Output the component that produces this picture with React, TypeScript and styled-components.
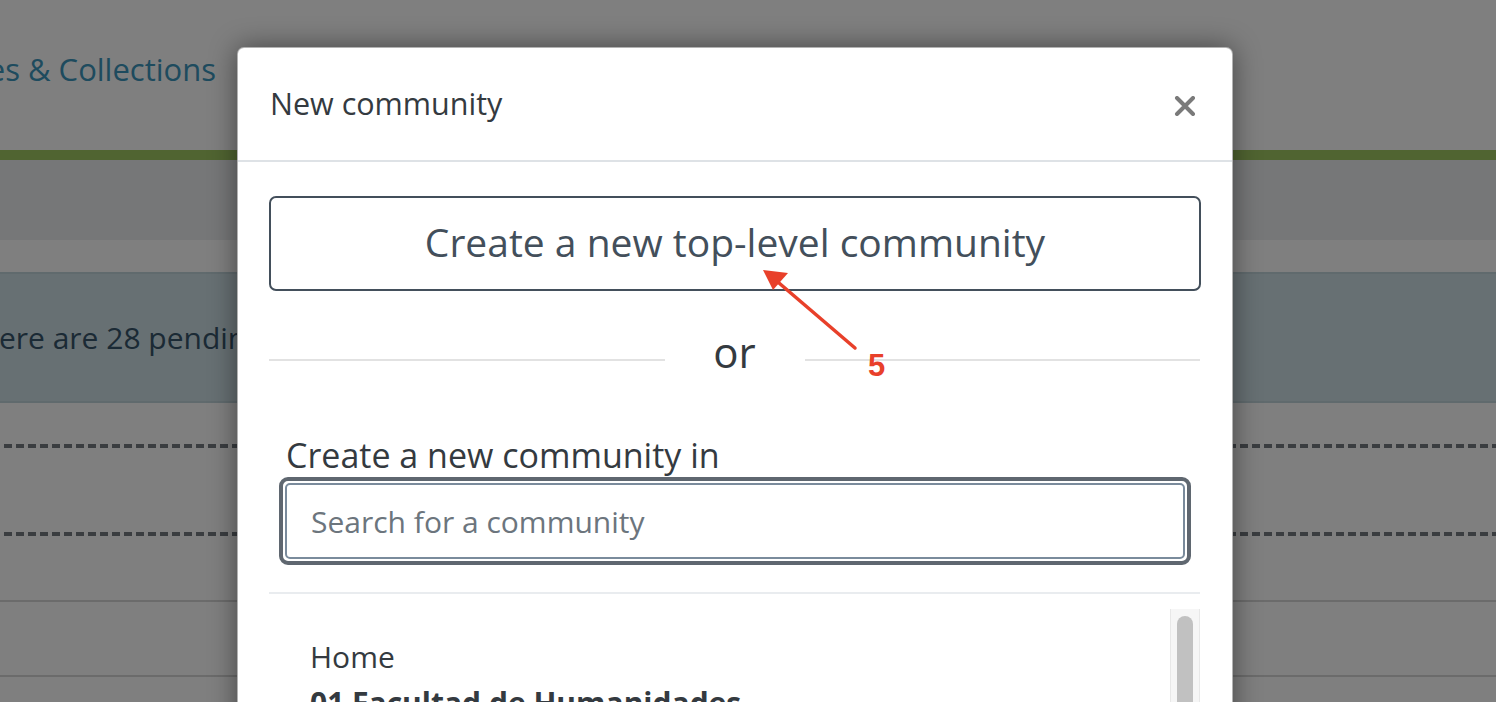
import React from "react";
import styled, { createGlobalStyle } from "styled-components";

const Global = createGlobalStyle`
  html, body { margin: 0; padding: 0; }
  body {
    width: 1496px;
    height: 702px;
    overflow: hidden;
    font-family: "Open Sans", "Noto Sans", "Liberation Sans", sans-serif;
    background: #ffffff;
  }
`;

const Stage = styled.div`
  position: relative;
  width: 1496px;
  height: 702px;
  overflow: hidden;
`;

const Page = styled.div`
  display: flex;
  flex-direction: column;
`;

const TopNav = styled.header`
  height: 150px;
  background: #ffffff;
  display: flex;
  align-items: flex-start;
`;

const NavLinkBox = styled.div`
  width: 216px;
  overflow: hidden;
  display: flex;
  justify-content: flex-end;
  white-space: nowrap;
  padding-top: 48px;
`;

const NavLink = styled.span`
  font-size: 31px;
  color: #3c96bc;
`;

const GreenBar = styled.div`
  height: 10px;
  background: #a0c862;
`;

const Breadcrumbs = styled.div`
  height: 80px;
  background: #eceef0;
`;

const Spacer = styled.div<{ h: number }>`
  height: ${(p) => p.h}px;
`;

const Alert = styled.div`
  height: 127px;
  background: #cee0e6;
  border-top: 2px solid #c0d4da;
  border-bottom: 2px solid #c0d4da;
  display: flex;
  align-items: center;
  overflow: hidden;
  white-space: nowrap;
`;

const AlertText = styled.span`
  font-size: 30px;
  color: #36546a;
  margin-left: -36px;
`;

const Dashed = styled.div`
  height: 4px;
  background-image: linear-gradient(to right, #747a80 0 8px, transparent 8px 12px);
  background-size: 12px 4px;
  background-position: 4px 0;
`;

const Solid = styled.div`
  height: 2px;
  background: #d6d6d6;
`;

const Backdrop = styled.div`
  position: absolute;
  inset: 0;
  background: rgba(0, 0, 0, 0.5);
`;

const Modal = styled.div`
  position: absolute;
  left: 237px;
  top: 47px;
  width: 996px;
  height: 700px;
  overflow: hidden;
  background: #ffffff;
  border-radius: 7px;
  border: 1px solid rgba(0, 0, 0, 0.3);
  box-sizing: border-box;
  box-shadow: 0 0 28px rgba(0, 0, 0, 0.45);
  display: flex;
  flex-direction: column;
  color: #343a40;
`;

const ModalHeader = styled.div`
  flex-shrink: 0;
  height: 114px;
  box-sizing: border-box;
  border-bottom: 2px solid #dee2e6;
  display: flex;
  align-items: center;
  justify-content: space-between;
  padding: 0 34px 0 32px;
`;

const Title = styled.h5`
  margin: 0;
  font-size: 30.5px;
  font-weight: 400;
  color: #343a40;
  padding-bottom: 2px;
`;

const Close = styled.button`
  border: none;
  background: none;
  padding: 0;
  width: 26px;
  height: 26px;
  display: flex;
  align-items: center;
  justify-content: center;
  cursor: pointer;
  margin-top: 4px;
`;

const Body = styled.div`
  flex-shrink: 0;
  padding: 34px 32px 0 31px;
  display: flex;
  flex-direction: column;
`;

const TopLevelButton = styled.button`
  flex-shrink: 0;
  height: 95px;
  width: 932px;
  box-sizing: border-box;
  border: 2px solid #434f5b;
  border-radius: 7px;
  background: #fff;
  color: #434f5b;
  font-family: inherit;
  font-size: 39px;
  padding: 0 0 4px;
`;

const OrRow = styled.div`
  display: grid;
  grid-template-columns: 1fr 140px 1fr;
  align-items: center;
  margin-top: 32px;
  height: 64px;
`;

const OrLine = styled.div`
  height: 2px;
  background: #e2e2e2;
  margin-top: 9px;
`;

const OrText = styled.span`
  text-align: center;
  font-size: 42px;
  color: #343a40;
  padding-bottom: 8px;
`;

const Label = styled.label`
  font-size: 34px;
  color: #343a40;
  margin: 48px 0 0 17px;
  line-height: 40px;
`;

const FocusRing = styled.div`
  margin: 2px 9px 0 10px;
  border: 4px solid #5f6770;
  border-radius: 9px;
  padding: 2px;
`;

const Input = styled.input`
  display: block;
  width: 100%;
  height: 76px;
  box-sizing: border-box;
  border: 2px solid #7a8b9c;
  border-radius: 5px;
  padding: 0 24px;
  font-family: inherit;
  font-size: 30px;
  color: #495057;
  outline: none;
  &::placeholder { color: #6c757d; }
`;

const Divider = styled.div`
  height: 2px;
  background: #e9ecef;
  margin-top: 27px;
`;

const ListArea = styled.div`
  display: flex;
  margin-top: 15px;
  height: 200px;
`;

const List = styled.ul`
  list-style: none;
  margin: 0;
  padding: 25px 0 0 41px;
  flex: 1;
`;

const Item = styled.li<{ bold?: boolean }>`
  font-size: 30px;
  line-height: 46px;
  font-weight: ${(p) => (p.bold ? 700 : 400)};
  color: #343a40;
`;

const Track = styled.div`
  width: 28px;
  background: #f6f6f6;
  border-left: 1px solid #e8e8e8;
  border-right: 1px solid #e8e8e8;
  display: flex;
  justify-content: center;
  padding-top: 7px;
`;

const Thumb = styled.div`
  width: 16px;
  height: 200px;
  border-radius: 8px;
  background: #c1c1c1;
`;

const Annotation = styled.svg`
  position: absolute;
  left: 740px;
  top: 260px;
  overflow: visible;
`;

const AnnotationNumber = styled.span`
  position: absolute;
  left: 868px;
  top: 348px;
  font-family: "Liberation Sans", Arial, sans-serif;
  font-weight: 700;
  font-size: 31px;
  color: #e8402a;
`;

export default function App() {
  return (
    <>
      <Global />
      <Stage>
        <Page>
          <TopNav>
            <NavLinkBox>
              <NavLink>Communities &amp; Collections</NavLink>
            </NavLinkBox>
          </TopNav>
          <GreenBar />
          <Breadcrumbs />
          <Spacer h={32} />
          <Alert>
            <AlertText>There are 28 pending submissions</AlertText>
          </Alert>
          <Spacer h={41} />
          <Dashed />
          <Spacer h={84} />
          <Dashed />
          <Spacer h={64} />
          <Solid />
          <Spacer h={73} />
          <Solid />
        </Page>
        <Backdrop />
        <Modal>
          <ModalHeader>
            <Title>New community</Title>
            <Close aria-label="Close">
              <svg width="22" height="20" viewBox="0 0 22 20">
                <path d="M3 2 L19 18 M19 2 L3 18" stroke="#7a7a7a" strokeWidth="4" strokeLinecap="round" />
              </svg>
            </Close>
          </ModalHeader>
          <Body>
            <TopLevelButton>Create a new top-level community</TopLevelButton>
            <OrRow>
              <OrLine />
              <OrText>or</OrText>
              <OrLine />
            </OrRow>
            <Label>Create a new community in</Label>
            <FocusRing>
              <Input placeholder="Search for a community" />
            </FocusRing>
            <Divider />
            <ListArea>
              <List>
                <Item>Home</Item>
                <Item bold>01 Facultad de Humanidades</Item>
              </List>
              <Track>
                <Thumb />
              </Track>
            </ListArea>
          </Body>
        </Modal>
        <Annotation width="130" height="100">
          <line x1="115" y1="88" x2="32" y2="17" stroke="#e8402a" strokeWidth="3.5" strokeLinecap="round" />
          <polygon points="23,10 48,13 33,30" fill="#e8402a" />
        </Annotation>
        <AnnotationNumber>5</AnnotationNumber>
      </Stage>
    </>
  );
}
